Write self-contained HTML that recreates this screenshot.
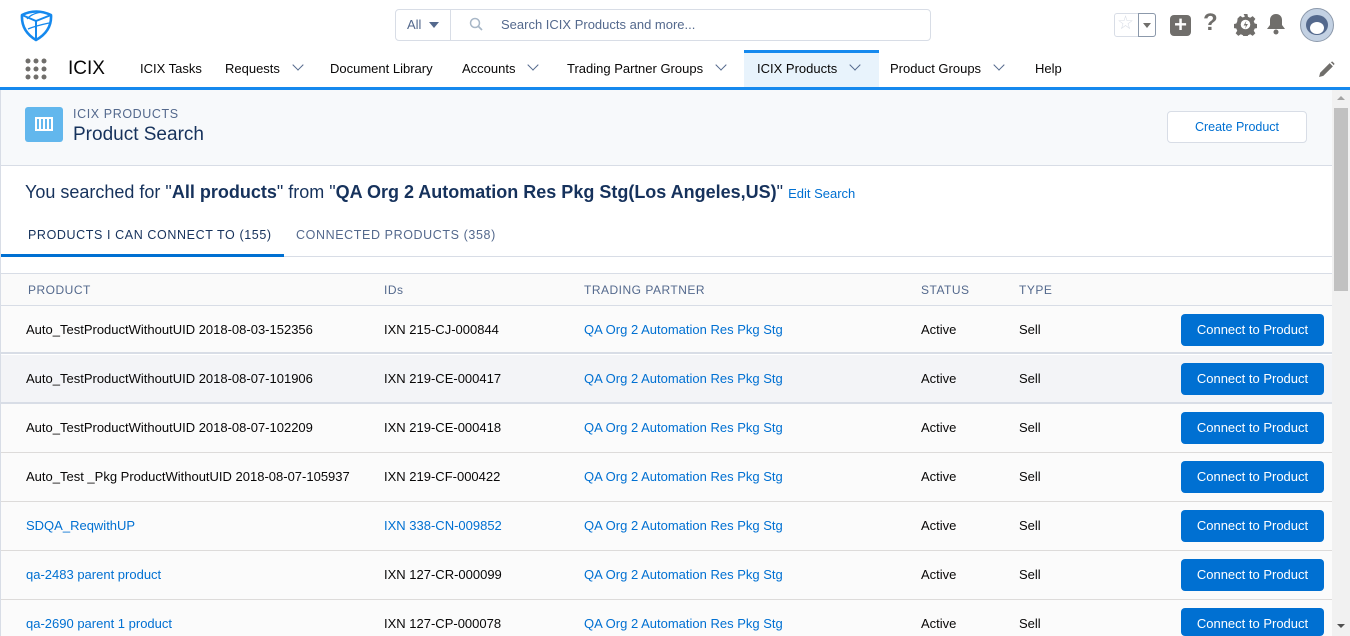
<!DOCTYPE html>
<html style="width:1350px;height:636px;overflow:hidden"><head><meta charset="utf-8">
<style>
*{box-sizing:border-box;margin:0;padding:0}
body{width:1350px;height:636px;overflow:hidden;background:#fff;font-family:"Liberation Sans",sans-serif;font-size:13px;color:#16325c;position:relative}
.abs{position:absolute}
.nav a{position:absolute;top:61px;font-size:13px;color:#080707;white-space:nowrap}
.chev{display:inline-block;width:8px;height:8px;border-right:1.6px solid #54698d;border-bottom:1.6px solid #54698d;transform:rotate(45deg);margin-left:14px;position:relative;top:-4px}
.row{position:absolute;left:1px;width:1331px;height:49px;border-bottom:1px solid #dddbda;background:#fbfbfb}
.row span{position:absolute;top:16px;white-space:nowrap;font-size:13px;color:#080707}
.row .l{color:#0070d2}
.btn{position:absolute;left:1180px;top:8px;width:143px;height:32px;background:#0070d2;border-radius:4px;color:#fff;font-size:13px;text-align:center;line-height:32px}
.hd{position:absolute;top:283px;font-size:12px;color:#54698d;letter-spacing:.5px}
</style></head><body>
<svg class="abs" style="left:19px;top:9px" width="35" height="33" viewBox="0 0 35 33"><g fill="none" stroke="#1589ee" stroke-width="2.6" stroke-linejoin="round"><path d="M3 6 Q17 -1 32 6 Q33 22 17 31 Q2 22 3 6Z"/><path d="M3 6 L17 12 L32 6 M17 12 L17 31" stroke-width="2"/><path d="M8 10 Q13 4 24 3 M9 20 Q16 17 30 14" stroke-width="1.3"/></g></svg>
<div class="abs" style="left:395px;top:9px;width:536px;height:32px;border:1px solid #d8dde6;border-radius:4px"></div>
<div class="abs" style="left:450px;top:10px;width:1px;height:30px;background:#d8dde6"></div>
<div class="abs" style="left:407px;top:17px;color:#54698d">All</div>
<div class="abs" style="left:429px;top:22px;width:0;height:0;border-left:5px solid transparent;border-right:5px solid transparent;border-top:6px solid #54698d"></div>
<svg class="abs" style="left:469px;top:17px" width="15" height="15"><circle cx="6" cy="6" r="4.5" fill="none" stroke="#a8b7c7" stroke-width="1.5"/><path d="M9.5 9.5 L13 13" stroke="#a8b7c7" stroke-width="1.7"/></svg>
<div class="abs" style="left:501px;top:17px;color:#54698d">Search ICIX Products and more...</div>
<div class="abs" style="left:1114px;top:13px;width:42px;height:24px;border:1px solid #d8dde6;border-radius:3px"></div>
<div class="abs" style="left:1117px;top:12px;color:#d8dde6;font-size:19px">☆</div>
<div class="abs" style="left:1138px;top:13px;width:18px;height:24px;border:1px solid #8c99ab;border-radius:0 3px 3px 0"></div>
<div class="abs" style="left:1143px;top:23px;border-left:4px solid transparent;border-right:4px solid transparent;border-top:5px solid #706e6b"></div>
<div class="abs" style="left:1170px;top:15px;width:21px;height:21px;background:#706e6b;border-radius:4px;color:#fff;font-size:22px;line-height:20px;text-align:center;font-weight:bold">+</div>
<div class="abs" style="left:1203px;top:9px;color:#706e6b;font-size:24px;font-weight:bold">?</div>
<svg class="abs" style="left:1234px;top:13px" width="23" height="23" viewBox="0 0 24 24"><path fill="#706e6b" d="M10 1h4l.6 3 2.3 1 2.6-1.7 2.8 2.8-1.7 2.6 1 2.3 3 .6v4l-3 .6-1 2.3 1.7 2.6-2.8 2.8-2.6-1.7-2.3 1-.6 3h-4l-.6-3-2.3-1-2.6 1.7-2.8-2.8 1.7-2.6-1-2.3-3-.6v-4l3-.6 1-2.3L3.7 5.8 6.5 3l2.6 1.7 2.3-1z"/><circle cx="12" cy="12" r="5" fill="#fff"/><path d="M13 8l-3 5h2.5l-1 3.5 3-5h-2.5z" fill="#706e6b"/></svg>
<svg class="abs" style="left:1266px;top:13px" width="20" height="22" viewBox="0 0 20 22"><path fill="#706e6b" d="M10 1c-4 0-6 3-6 6v5l-3 4h18l-3-4V7c0-3-2-6-6-6z"/><circle cx="10" cy="19" r="2.5" fill="#706e6b"/></svg>
<div class="abs" style="left:1300px;top:8px;width:34px;height:34px;border-radius:50%;background:#c3d1e3;border:1px solid #8c99ab;overflow:hidden">
<div class="abs" style="left:5px;top:6px;width:22px;height:20px;border-radius:50%;background:#54698d"></div>
<div class="abs" style="left:9px;top:13px;width:14px;height:12px;border-radius:50%;background:#fff"></div>
</div>
<div class="nav">
<svg class="abs" style="left:25px;top:58px" width="22" height="22"><g fill="#706e6b"><circle cx="3" cy="3" r="2.5"/><circle cx="11" cy="3" r="2.5"/><circle cx="19" cy="3" r="2.5"/><circle cx="3" cy="11" r="2.5"/><circle cx="11" cy="11" r="2.5"/><circle cx="19" cy="11" r="2.5"/><circle cx="3" cy="19" r="2.5"/><circle cx="11" cy="19" r="2.5"/><circle cx="19" cy="19" r="2.5"/></g></svg>
<div class="abs" style="left:68px;top:58px;font-size:19px;color:#080707">ICIX</div>
<a style="left:140px">ICIX Tasks</a>
<a style="left:225px">Requests<i class="chev"></i></a>
<a style="left:330px">Document Library</a>
<a style="left:462px">Accounts<i class="chev"></i></a>
<div class="abs" style="left:744px;top:50px;width:135px;height:37px;background:#e8f3fc;border-top:3px solid #1589ee"></div>
<a style="left:567px">Trading Partner Groups<i class="chev"></i></a>
<a style="left:757px">ICIX Products<i class="chev"></i></a>
<a style="left:890px">Product Groups<i class="chev"></i></a>
<a style="left:1035px">Help</a>
<svg class="abs" style="left:1318px;top:61px" width="17" height="17" viewBox="0 0 16 16"><path fill="#706e6b" d="M1 15l1-4 9-9 3 3-9 9zM12 1l1.5-.5 2 2L15 4z"/></svg>
</div>
<div class="abs" style="left:0;top:87px;width:1350px;height:3px;background:#1589ee"></div>
<div class="abs" style="left:0;top:90px;width:1332px;height:76px;background:#f7f9fb;border-left:1px solid #d8dde6;border-bottom:1px solid #d8dde6"></div>
<div class="abs" style="left:25px;top:107px;width:38px;height:35px;background:#62b7ed;border-radius:3px"></div>
<div class="abs" style="left:35px;top:117px;width:18px;height:14px;border-top:2px solid #fff;border-bottom:2px solid #fff;background:repeating-linear-gradient(90deg,#fff 0 2px,transparent 2px 4px)"></div>
<div class="abs" style="left:73px;top:107px;font-size:12.5px;color:#54698d;letter-spacing:.6px">ICIX PRODUCTS</div>
<div class="abs" style="left:73px;top:124px;font-size:19px;color:#16325c">Product Search</div>
<div class="abs" style="left:1167px;top:111px;width:140px;height:32px;border:1px solid #d8dde6;border-radius:4px;background:#fff;color:#0070d2;font-size:12.5px;text-align:center;line-height:30px">Create Product</div>
<div class="abs" style="left:0;top:166px;width:1332px;height:470px;border-left:1px solid #d8dde6"></div>
<div class="abs" style="left:25px;top:182px;font-size:18px;color:#16325c;white-space:nowrap">You searched for "<b>All products</b>" from "<b>QA Org 2 Automation Res Pkg Stg(Los Angeles,US)</b>" <span style="font-size:13px;color:#0070d2">Edit Search</span></div>
<div class="abs" style="left:28px;top:228px;font-size:12.5px;color:#16325c;letter-spacing:.6px">PRODUCTS I CAN CONNECT TO (155)</div>
<div class="abs" style="left:296px;top:228px;font-size:12.5px;color:#54698d;letter-spacing:.6px">CONNECTED PRODUCTS (358)</div>
<div class="abs" style="left:1px;top:256px;width:1331px;height:1px;background:#d8dde6"></div>
<div class="abs" style="left:1px;top:254px;width:283px;height:3px;background:#0070d2"></div>
<div class="abs" style="left:1px;top:273px;width:1331px;height:33px;background:#fafafa;border-top:1px solid #d8dde6;border-bottom:1px solid #d8dde6"></div>
<div class="hd" style="left:28px">PRODUCT</div>
<div class="hd" style="left:384px">IDs</div>
<div class="hd" style="left:584px">TRADING PARTNER</div>
<div class="hd" style="left:921px">STATUS</div>
<div class="hd" style="left:1019px">TYPE</div>

<div class="row" style="top:306px;height:48px;border-bottom:2px solid #d8dde6"><span style="left:25px">Auto_TestProductWithoutUID 2018-08-03-152356</span><span style="left:383px">IXN 215-CJ-000844</span><span class="l" style="left:583px">QA Org 2 Automation Res Pkg Stg</span><span style="left:920px">Active</span><span style="left:1018px">Sell</span><div class="btn" style="top:8px">Connect to Product</div></div>
<div class="row" style="top:355px;height:49px;background:#f3f4f7;border-bottom:2px solid #d8dde6"><span style="left:25px">Auto_TestProductWithoutUID 2018-08-07-101906</span><span style="left:383px">IXN 219-CE-000417</span><span class="l" style="left:583px">QA Org 2 Automation Res Pkg Stg</span><span style="left:920px">Active</span><span style="left:1018px">Sell</span><div class="btn">Connect to Product</div></div>
<div class="row" style="top:404px"><span style="left:25px">Auto_TestProductWithoutUID 2018-08-07-102209</span><span style="left:383px">IXN 219-CE-000418</span><span class="l" style="left:583px">QA Org 2 Automation Res Pkg Stg</span><span style="left:920px">Active</span><span style="left:1018px">Sell</span><div class="btn">Connect to Product</div></div>
<div class="row" style="top:453px"><span style="left:25px">Auto_Test _Pkg ProductWithoutUID 2018-08-07-105937</span><span style="left:383px">IXN 219-CF-000422</span><span class="l" style="left:583px">QA Org 2 Automation Res Pkg Stg</span><span style="left:920px">Active</span><span style="left:1018px">Sell</span><div class="btn">Connect to Product</div></div>
<div class="row" style="top:502px"><span class="l" style="left:25px">SDQA_ReqwithUP</span><span class="l" style="left:383px">IXN 338-CN-009852</span><span class="l" style="left:583px">QA Org 2 Automation Res Pkg Stg</span><span style="left:920px">Active</span><span style="left:1018px">Sell</span><div class="btn">Connect to Product</div></div>
<div class="row" style="top:551px"><span class="l" style="left:25px">qa-2483 parent product</span><span style="left:383px">IXN 127-CR-000099</span><span class="l" style="left:583px">QA Org 2 Automation Res Pkg Stg</span><span style="left:920px">Active</span><span style="left:1018px">Sell</span><div class="btn">Connect to Product</div></div>
<div class="row" style="top:600px;height:36px;border-bottom:none"><span class="l" style="left:25px">qa-2690 parent 1 product</span><span style="left:383px">IXN 127-CP-000078</span><span class="l" style="left:583px">QA Org 2 Automation Res Pkg Stg</span><span style="left:920px">Active</span><span style="left:1018px">Sell</span><div class="btn" style="height:28px">Connect to Product</div></div>
<div class="abs" style="left:1332px;top:90px;width:18px;height:546px;background:#f1f1f1"></div>
<div class="abs" style="left:1334px;top:108px;width:14px;height:183px;background:#c1c1c1"></div>
<div class="abs" style="left:1337px;top:96px;border-left:4px solid transparent;border-right:4px solid transparent;border-bottom:4px solid #a3a3a3"></div>
<div class="abs" style="left:1337px;top:624px;border-left:4px solid transparent;border-right:4px solid transparent;border-top:4px solid #505050"></div>
</body></html>
